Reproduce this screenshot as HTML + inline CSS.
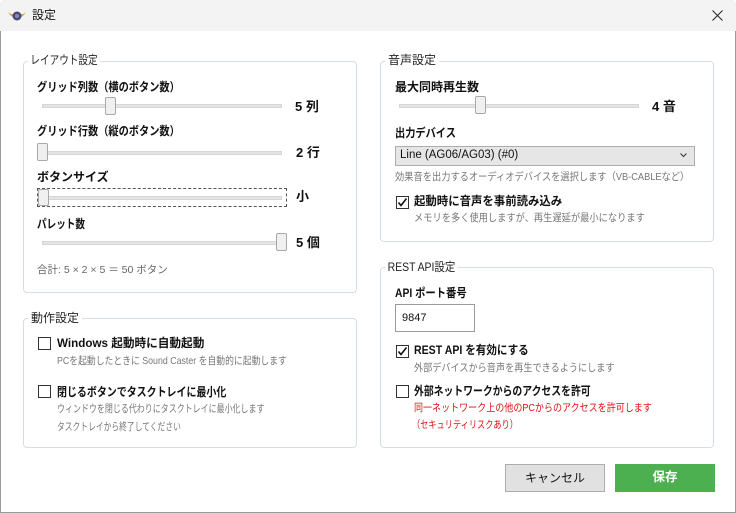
<!DOCTYPE html>
<html><head><meta charset="utf-8"><style>
*{margin:0;padding:0;box-sizing:border-box}
body{width:736px;height:513px;background:#fff;font-family:"Liberation Sans","Noto Sans CJK JP",sans-serif;position:relative;overflow:hidden;color:#111}
.a{position:absolute;white-space:nowrap;line-height:1;transform-origin:0 0}
.win{position:absolute;left:0;top:0;width:736px;height:513px;border:1px solid #9a9a9a;border-radius:6px 6px 0 0}
.title{position:absolute;left:0;top:0;width:736px;height:31px;background:#f3f3f3;border-radius:6px 6px 0 0}
.grp{position:absolute;border:1px solid #d5dde5;border-radius:4px}
.leg{position:absolute;background:#fff;padding:0 3px;font-size:12px;color:#222;line-height:1;white-space:nowrap;transform-origin:0 0}
.lbl{font-size:12px;font-weight:bold}
.sub{font-size:10.5px;color:#777}
.track{position:absolute;height:4px;background:#e4e4e4;border:1px solid #d6d6d6}
.thumb{position:absolute;width:11px;height:18px;background:#f0f0f0;border:1px solid #a8a8a8;border-radius:2px}
.val{font-size:13px;font-weight:bold}
.cb{position:absolute;width:13px;height:13px;border:1px solid #333;background:#fff}
.cb svg{position:absolute;left:0;top:0}
</style></head><body>
<div class="win"></div>
<div class="title"></div>
<svg class="a" style="left:7px;top:8px" width="20" height="14" viewBox="0 0 20 14"><path d="M1 4 Q4 10 9 9 L11 9 Q16 10 19 4 Q16 7 12 6 L8 6 Q4 7 1 4Z" fill="#d8a830"/><circle cx="10" cy="8" r="4.5" fill="#4a4a7a"/><circle cx="10" cy="8" r="2" fill="#8888bb"/></svg>
<div class="a" style="left:32px;top:9px;font-size:12px">設定</div>
<svg class="a" style="left:712px;top:10px" width="11" height="11" viewBox="0 0 11 11"><path d="M0.5 0.5L10.5 10.5M10.5 0.5L0.5 10.5" stroke="#222" stroke-width="1"/></svg>

<!-- Layout group -->
<div class="grp" style="left:23px;top:61px;width:334px;height:232px"></div>
<div class="leg" style="left:28px;top:54px;transform:scaleX(0.8)">レイアウト設定</div>
<div class="a lbl" style="left:37px;top:81px;transform:scaleX(0.85)">グリッド列数（横のボタン数）</div>
<div class="track" style="left:42px;top:104px;width:240px"></div>
<div class="thumb" style="left:105px;top:97px"></div>
<div class="a val" style="left:295px;top:100px">5 列</div>
<div class="a lbl" style="left:37px;top:125px;transform:scaleX(0.85)">グリッド行数（縦のボタン数）</div>
<div class="track" style="left:42px;top:151px;width:240px"></div>
<div class="thumb" style="left:37px;top:143px"></div>
<div class="a val" style="left:296px;top:146px">2 行</div>
<div class="a lbl" style="left:37px;top:171px">ボタンサイズ</div>
<div style="position:absolute;left:37px;top:188px;width:250px;height:19px;border:1px dashed #555"></div>
<div class="track" style="left:42px;top:196px;width:240px"></div>
<div class="thumb" style="left:38px;top:189px;height:17px"></div>
<div class="a val" style="left:296px;top:190px">小</div>
<div class="a lbl" style="left:37px;top:218px;transform:scaleX(0.8)">パレット数</div>
<div class="track" style="left:42px;top:241px;width:240px"></div>
<div class="thumb" style="left:276px;top:233px"></div>
<div class="a val" style="left:296px;top:236px">5 個</div>
<div class="a sub" style="left:37px;top:265px;color:#666">合計: 5 × 2 × 5 ＝ 50 ボタン</div>

<!-- 動作設定 -->
<div class="grp" style="left:23px;top:318px;width:334px;height:130px"></div>
<div class="leg" style="left:28px;top:312px">動作設定</div>
<div class="cb" style="left:38px;top:337px"></div>
<div class="a lbl" style="left:57px;top:337px;transform:scaleX(0.97)">Windows 起動時に自動起動</div>
<div class="a sub" style="left:57px;top:356px;transform:scaleX(0.84)">PCを起動したときに Sound Caster を自動的に起動します</div>
<div class="cb" style="left:38px;top:385px"></div>
<div class="a lbl" style="left:57px;top:386px;transform:scaleX(0.83)">閉じるボタンでタスクトレイに最小化</div>
<div class="a sub" style="left:57px;top:404px;transform:scaleX(0.76)">ウィンドウを閉じる代わりにタスクトレイに最小化します</div>
<div class="a sub" style="left:57px;top:422px;transform:scaleX(0.74)">タスクトレイから終了してください</div>

<!-- 音声設定 -->
<div class="grp" style="left:380px;top:61px;width:334px;height:181px"></div>
<div class="leg" style="left:385px;top:54px">音声設定</div>
<div class="a lbl" style="left:395px;top:81px">最大同時再生数</div>
<div class="track" style="left:399px;top:104px;width:240px"></div>
<div class="thumb" style="left:475px;top:96px"></div>
<div class="a val" style="left:652px;top:100px">4 音</div>
<div class="a lbl" style="left:395px;top:127px;transform:scaleX(0.85)">出力デバイス</div>
<div style="position:absolute;left:395px;top:146px;width:300px;height:20px;background:#e6e6e6;border:1px solid #adadad"></div>
<div class="a" style="left:400px;top:150px;font-size:11.5px">Line (AG06/AG03) (#0)</div>
<svg class="a" style="left:680px;top:153px" width="7" height="5" viewBox="0 0 7 5"><path d="M0.5 0.5L3.5 3.5L6.5 0.5" stroke="#333" fill="none"/></svg>
<div class="a sub" style="left:395px;top:172px;transform:scaleX(0.88)">効果音を出力するオーディオデバイスを選択します（VB-CABLEなど）</div>
<div class="cb" style="left:396px;top:196px"><svg width="11" height="11" viewBox="0 0 11 11"><path d="M1.5 5.5L4 8.5L9.5 1.5" stroke="#111" stroke-width="1.6" fill="none"/></svg></div>
<div class="a lbl" style="left:414px;top:195px;transform:scaleX(0.95)">起動時に音声を事前読み込み</div>
<div class="a sub" style="left:414px;top:213px;transform:scaleX(0.88)">メモリを多く使用しますが、再生遅延が最小になります</div>

<!-- REST API -->
<div class="grp" style="left:380px;top:267px;width:334px;height:181px"></div>
<div class="leg" style="left:385px;top:261px;transform:scaleX(0.87)">REST API設定</div>
<div class="a lbl" style="left:395px;top:287px;transform:scaleX(0.86)">API ポート番号</div>
<div style="position:absolute;left:395px;top:304px;width:80px;height:28px;border:1px solid #9a9a9a;background:#fff"></div>
<div class="a" style="left:402px;top:313px;font-size:11px">9847</div>
<div class="cb" style="left:396px;top:345px"><svg width="11" height="11" viewBox="0 0 11 11"><path d="M1.5 5.5L4 8.5L9.5 1.5" stroke="#111" stroke-width="1.6" fill="none"/></svg></div>
<div class="a lbl" style="left:414px;top:344px;transform:scaleX(0.88)">REST API を有効にする</div>
<div class="a sub" style="left:414px;top:363px;transform:scaleX(0.87)">外部デバイスから音声を再生できるようにします</div>
<div class="cb" style="left:396px;top:385px"></div>
<div class="a lbl" style="left:414px;top:385px;transform:scaleX(0.82)">外部ネットワークからのアクセスを許可</div>
<div class="a sub" style="left:414px;top:403px;color:#e01010;transform:scaleX(0.86)">同一ネットワーク上の他のPCからのアクセスを許可します</div>
<div class="a sub" style="left:412px;top:420px;color:#e01010;transform:scaleX(0.78)">（セキュリティリスクあり）</div>

<!-- buttons -->
<div style="position:absolute;left:505px;top:464px;width:100px;height:28px;background:#e1e1e1;border:1px solid #adadad"></div>
<div class="a" style="left:505px;top:472px;width:100px;text-align:center;font-size:12px">キャンセル</div>
<div style="position:absolute;left:615px;top:464px;width:100px;height:28px;background:#4caf50"></div>
<div class="a" style="left:615px;top:471px;width:100px;text-align:center;font-size:12.5px;font-weight:bold;color:#fff">保存</div>
</body></html>
